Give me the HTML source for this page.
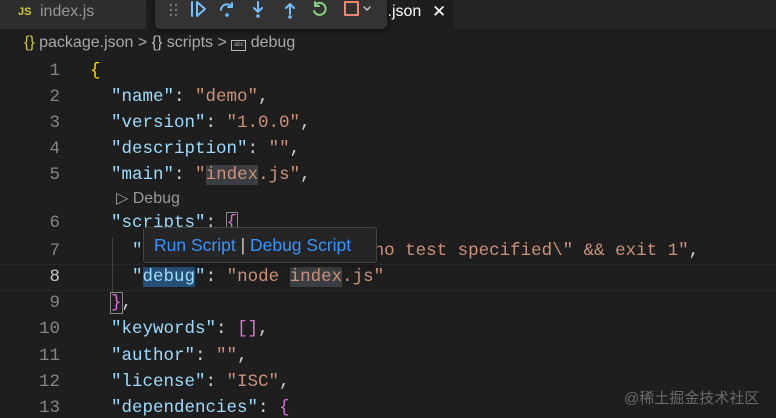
<!DOCTYPE html>
<html><head><meta charset="utf-8"><style>
*{margin:0;padding:0;box-sizing:border-box}
body{width:776px;height:414px;overflow:hidden;background:#1e1e1e;font-family:"Liberation Sans",sans-serif;position:relative}
.tabs{position:absolute;left:0;top:0;width:776px;height:29px;background:#252526}
.tab1{position:absolute;left:0;top:0;width:146px;height:29px;background:#2d2d2d;color:#969696;font-size:16px}
.tab2{position:absolute;left:146px;top:0;width:308px;height:29px;background:#1e1e1e;color:#fff;font-size:16px}
.abs{position:absolute;white-space:pre}
.bc{color:#a9a9a9;font-size:16px}
.code{font-family:"Liberation Mono",monospace;font-size:17.5px;color:#d4d4d4}
.k{color:#9cdcfe}.s{color:#ce9178}.b{color:#ffd700}.p{color:#da70d6}
.ln{position:absolute;left:20px;width:40px;text-align:right;font-family:"Liberation Mono",monospace;font-size:17.5px;color:#858585}
.tb{position:absolute;left:155px;top:0;width:232px;height:29px;background:#333333;border-radius:0 0 5px 5px;box-shadow:0 2px 6px rgba(0,0,0,.6)}
</style></head><body>
<div class="tabs"></div>
<div class="tab1"><span class="abs" style="left:18px;top:6px;color:#cbcb41;font-size:11px;font-weight:bold">JS</span><span class="abs" style="left:40px;top:3px">index.js</span></div>
<div class="tab2"><span class="abs" style="left:181px;top:3px">package.json</span><span class="abs" style="left:286px;top:2px;font-size:17px">✕</span></div>
<div class="tb">
<svg width="232" height="29" viewBox="0 0 232 29" fill="none" stroke-width="2" stroke-linecap="round" stroke-linejoin="round">
<g fill="#777"><circle cx="16" cy="5" r="1.2"/><circle cx="21" cy="5" r="1.2"/><circle cx="16" cy="10" r="1.2"/><circle cx="21" cy="10" r="1.2"/><circle cx="16" cy="15" r="1.2"/><circle cx="21" cy="15" r="1.2"/></g>
<path d="M37 2v14M42 2l8 7-8 7z" stroke="#75beff"/>
<path d="M66 10a6 6 0 0 1 11-3M77 3v4h-4" stroke="#75beff"/><circle cx="72" cy="15" r="1.8" fill="#75beff"/>
<path d="M103 2v10M99 8l4 4 4-4" stroke="#75beff"/><circle cx="103" cy="16" r="1.8" fill="#75beff"/>
<path d="M135 14V4M131 8l4-4 4 4" stroke="#75beff"/><circle cx="135" cy="17" r="1.8" fill="#75beff"/>
<path d="M160 5a6 6 0 1 1-1 6M160 2v4h4" stroke="#89d185"/>
<rect x="190" y="2" width="13" height="13" stroke="#f48771"/>
<path d="M209 7l3 3 3-3" stroke="#ccc" stroke-width="1.3"/>
</svg></div>
<div class="abs bc" style="left:24px;top:34px"><span style="color:#cbcb41">{}</span> package.json <span>&gt;</span> <span style="color:#bbb">{}</span> scripts <span>&gt;</span> <span style="display:inline-block;width:15px;height:11px;border:1px solid #bbb;font-size:6px;line-height:9px;text-align:center;vertical-align:1px">abc</span> debug</div>
<div style="position:absolute;left:0;top:264px;width:776px;height:27px;border-top:1px solid #282828;border-bottom:1px solid #282828"></div>
<div style="position:absolute;left:112px;top:237px;width:1px;height:55px;background:#404040"></div>
<div class="ln" style="top:61px">1</div><div class="ln" style="top:87px">2</div><div class="ln" style="top:113px">3</div><div class="ln" style="top:139px">4</div><div class="ln" style="top:165px">5</div>
<div class="ln" style="top:213px">6</div><div class="ln" style="top:241px">7</div><div class="ln" style="top:267px;color:#c6c6c6">8</div><div class="ln" style="top:293px">9</div><div class="ln" style="top:319px">10</div><div class="ln" style="top:346px">11</div><div class="ln" style="top:372px">12</div><div class="ln" style="top:398px">13</div>
<div class="abs code" style="left:90px;top:61px"><span class="b">{</span></div>
<div class="abs code" style="left:90px;top:87px">  <span class="k">"name"</span>: <span class="s">"demo"</span>,</div>
<div class="abs code" style="left:90px;top:113px">  <span class="k">"version"</span>: <span class="s">"1.0.0"</span>,</div>
<div class="abs code" style="left:90px;top:139px">  <span class="k">"description"</span>: <span class="s">""</span>,</div>
<div class="abs code" style="left:90px;top:165px">  <span class="k">"main"</span>: <span class="s">"<span style="background:#3a3d41">index</span>.js"</span>,</div>
<div class="abs" style="left:116px;top:188px;color:#999;font-size:16px">▷ Debug</div>
<div class="abs code" style="left:90px;top:213px">  <span class="k">"scripts"</span>: <span class="p" style="outline:1px solid #888">{</span></div>
<div class="abs code" style="left:90px;top:241px">    <span class="k">"test"</span>: <span class="s">"echo \"Error: no test specified\" &amp;&amp; exit 1"</span>,</div>
<div class="abs code" style="left:90px;top:267px">    <span class="k">"<span style="background:#264f78">debug</span>"</span>: <span class="s">"node <span style="background:#3a3d41">index</span>.js"</span></div>
<div class="abs code" style="left:90px;top:293px">  <span class="p" style="outline:1px solid #888">}</span>,</div>
<div class="abs code" style="left:90px;top:319px">  <span class="k">"keywords"</span>: <span class="p">[]</span>,</div>
<div class="abs code" style="left:90px;top:346px">  <span class="k">"author"</span>: <span class="s">""</span>,</div>
<div class="abs code" style="left:90px;top:372px">  <span class="k">"license"</span>: <span class="s">"ISC"</span>,</div>
<div class="abs code" style="left:90px;top:398px">  <span class="k">"dependencies"</span>: <span class="p">{</span></div>
<div style="position:absolute;left:143px;top:227px;width:234px;height:36px;background:#252526;border:1px solid #454545;border-radius:3px;box-shadow:0 2px 6px rgba(0,0,0,.4)"><span class="abs" style="left:10px;top:7px;font-size:17.5px;color:#3794ff">Run Script <span style="color:#ccc">|</span> Debug Script</span></div>
<div class="abs" style="left:624px;top:387px;font-size:15px;color:#6a6a6a;font-family:'Liberation Sans','Noto Sans CJK SC',sans-serif">@稀土掘金技术社区</div>
</body></html>
